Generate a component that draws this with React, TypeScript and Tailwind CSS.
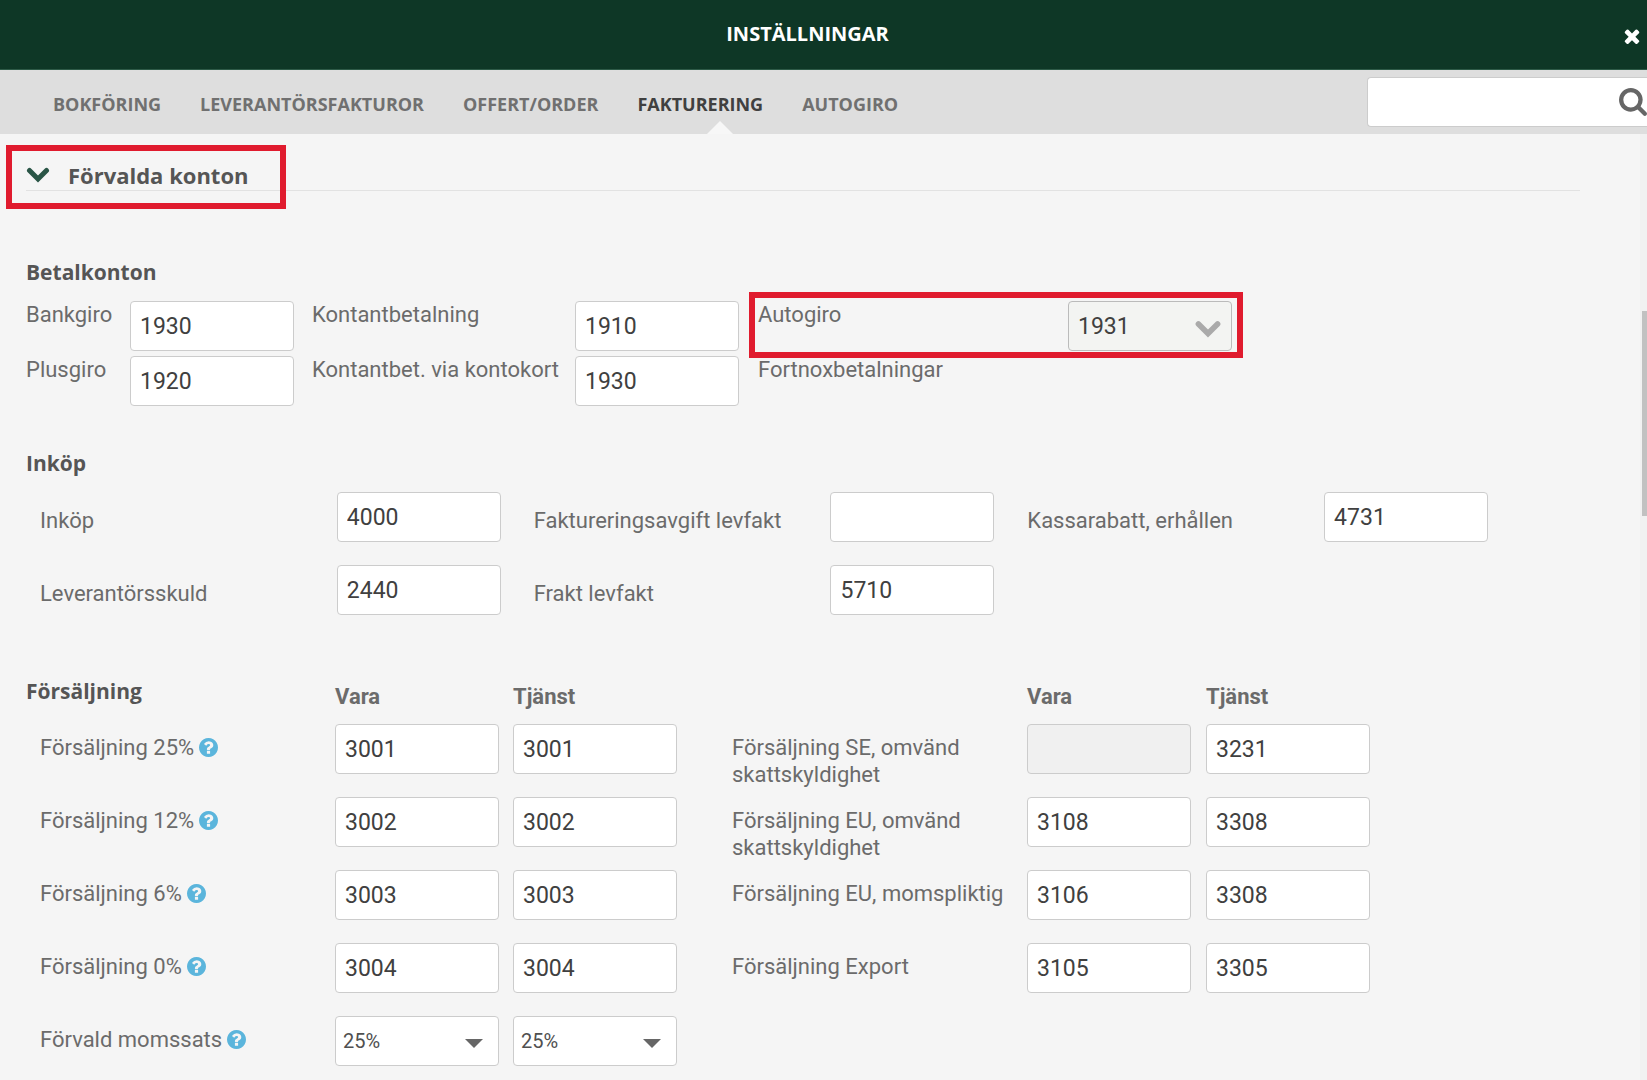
import { ReactNode } from "react";

const tabs = ["Bokföring", "Leverantörsfakturor", "Offert/Order", "Fakturering", "Autogiro"];

const purchaseFields = [
  { id: "inkop", label: "Inköp", value: "4000" },
  { id: "fakturaavgift", label: "Faktureringsavgift levfakt", value: "" },
  { id: "kassarabatt", label: "Kassarabatt, erhållen", value: "4731" },
  { id: "levskuld", label: "Leverantörsskuld", value: "2440" },
  { id: "frakt", label: "Frakt levfakt", value: "5710" },
];

const salesRows = [
  { id: "25", label: "Försäljning 25%", values: ["3001", "3001"], other: "Försäljning SE, omvänd skattskyldighet", otherValues: ["", "3231"] },
  { id: "12", label: "Försäljning 12%", values: ["3002", "3002"], other: "Försäljning EU, omvänd skattskyldighet", otherValues: ["3108", "3308"] },
  { id: "6", label: "Försäljning 6%", values: ["3003", "3003"], other: "Försäljning EU, momspliktig", otherValues: ["3106", "3308"] },
  { id: "0", label: "Försäljning 0%", values: ["3004", "3004"], other: "Försäljning Export", otherValues: ["3105", "3305"] },
];

const CloseIcon = () => (
  <svg viewBox="0 0 1792 1792" className="w-[22px] h-[22px]" fill="currentColor">
    <path d="M1490 1322q0 40-28 68l-136 136q-28 28-68 28t-68-28l-294-294-294 294q-28 28-68 28t-68-28l-136-136q-28-28-28-68t28-68l294-294-294-294q-28-28-28-68t28-68l136-136q28-28 68-28t68 28l294 294 294-294q28-28 68-28t68 28l136 136q28 28 28 68t-28 68l-294 294 294 294q28 28 28 68z" />
  </svg>
)

const SearchIcon = () => (
  <svg viewBox="64 128 1664 1664" className="w-7 h-7" fill="currentColor">
    <path d="M1216 832q0-185-131.5-316.5t-316.5-131.5-316.5 131.5-131.5 316.5 131.5 316.5 316.5 131.5 316.5-131.5 131.5-316.5zm512 832q0 52-38 90t-90 38q-54 0-90-38l-343-342q-179 124-399 124-143 0-273.5-55.5t-225-150-150-225-55.5-273.5 55.5-273.5 150-225 225-150 273.5-55.5 273.5 55.5 225 150 150 225 55.5 273.5q0 220-124 399l343 343q37 37 37 90z" />
  </svg>
)

const HelpIcon = () => (
  <svg viewBox="128 128 1536 1536" className="w-[19px] h-[19px]" fill="currentColor">
    <path d="M1024 1376v-192q0-14-9-23t-23-9h-192q-14 0-23 9t-9 23v192q0 14 9 23t23 9h192q14 0 23-9t9-23zm256-672q0-88-55.5-163t-138.5-116-170-41q-243 0-371 213-15 24 8 42l132 100q7 6 19 6 16 0 25-12 53-68 86-92 34-24 86-24 48 0 85.5 26t37.5 59q0 38-20 61t-68 45q-63 28-115.5 86.5t-52.5 125.5v36q0 14 9 23t23 9h192q14 0 23-9t9-23q0-19 21.5-49.5t54.5-49.5q32-18 49-28.5t46-35 44.5-48 28-60.5 12.5-81zm384 192q0 209-103 385.5t-279.5 279.5-385.5 103-385.5-103-279.5-279.5-103-385.5 103-385.5 279.5-279.5 385.5-103 385.5 103 279.5 279.5 103 385.5z" />
  </svg>
)

const Chevron = ({ className }: { className: string }) => (
  <svg viewBox="0 0 24 16" className={className} fill="none" stroke="currentColor" strokeWidth="5" strokeLinecap="round">
    <path d="M3.5 3.5 12 12l8.5-8.5" />
  </svg>
)

const Heading = ({ children }: { children: ReactNode }) => (
  <h3 className="font-['Open_Sans',sans-serif] font-bold text-[21px] leading-7 text-[#555]">{children}</h3>
)

const AccountInput = ({ id, value, label, disabled }: { id: string; value: string; label?: string; disabled?: boolean }) => (
  <input
    id={id}
    aria-label={label}
    defaultValue={value}
    disabled={disabled}
    className="w-[164px] h-[50px] rounded border border-[#ccc] bg-white px-[9px] text-[23px] text-[#404040] disabled:bg-[#f0f0f0]"
  />
)

const HelpLabel = ({ id, children }: { id: string; children: string }) => (
  <div className="flex items-start pl-3.5 pt-2.5">
    <label htmlFor={id}>{children}</label>
    <button type="button" aria-label="Hjälp" className="ml-[5px] mt-1 text-[#5bb5dc]"><HelpIcon /></button>
  </div>
)

const VatSelect = ({ id, label }: { id: string; label?: string }) => (
  <div className="relative w-[164px]">
    <select id={id} aria-label={label} className="w-full h-[50px] appearance-none rounded border border-[#ccc] bg-white px-[7px] text-xl text-[#505050]">
      <option>25%</option>
    </select>
    <svg viewBox="0 0 18 9" className="absolute right-4 top-[23px] w-[18px] h-[9px] pointer-events-none" fill="#666">
      <path d="M0 0h18L9 9z" />
    </svg>
  </div>
)

const App = () => (
  <div className="min-h-screen flex flex-col bg-[#f5f5f5] text-[22px] leading-[27px] text-[#6b6b6b] font-[Roboto,sans-serif]">
    <header className="relative h-[70px] pb-0.5 flex items-center justify-center bg-[#0e3726] border-b border-[#2d5a47]">
      <h1 className="font-['Open_Sans',sans-serif] font-bold text-xl text-white pr-8">INSTÄLLNINGAR</h1>
      <button aria-label="Stäng" className="absolute right-1 top-[25px] text-white"><CloseIcon /></button>
    </header>

    <nav className="h-16 flex items-center justify-between bg-[#dedede]">
      <ul className="h-full flex items-center gap-[39px] pl-[53px] font-['Open_Sans',sans-serif] font-bold text-lg text-[#707070]">
        {tabs.map((tab) => (
          <li key={tab} className="relative h-full flex items-center pt-1">
            <a href="#" className={tab === "Fakturering" ? "uppercase text-[#404040]" : "uppercase"}>{tab}</a>
            {tab === "Fakturering" && (
              <svg viewBox="0 0 26 13" className="absolute bottom-0 right-[30px] w-[26px] h-[13px]" fill="#f7f7f7">
                <path d="M0 13 13 0l13 13z" />
              </svg>
            )}
          </li>
        ))}
      </ul>
      <div className="w-[280px] h-[50px] flex items-center rounded-l border border-r-0 border-[#ccc] bg-white text-[#666]">
        <input aria-label="Sök" className="min-w-0 flex-1 h-full px-2 outline-none" />
        <button aria-label="Sök"><SearchIcon /></button>
      </div>
    </nav>

    <div className="flex-1 flex">
      <main className="flex-1 pl-[26px] pr-[60px]">
        <div className="h-[57px] flex items-end pb-px border-b border-[#e2e2e2]">
          <button className="relative flex items-center gap-[18px]">
            <Chevron className="w-6 h-4 text-[#2a5546]" />
            <h2 className="font-['Open_Sans',sans-serif] font-bold text-[22px] leading-7 text-[#555]">Förvalda konton</h2>
            <span className="absolute -left-5 -right-[38px] -top-4 h-16 border-6 border-[#e01b2e]" />
          </button>
        </div>

        <form className="pr-[59px]">
          <section className="pt-[67px]">
            <Heading>Betalkonton</Heading>
            <div className="mt-[15px] grid grid-cols-[104fr_182fr_263fr_183fr_310fr_453fr] gap-y-[5px]">
              <label htmlFor="bankgiro">Bankgiro</label>
              <AccountInput id="bankgiro" value="1930" />
              <label htmlFor="kontant">Kontantbetalning</label>
              <AccountInput id="kontant" value="1910" />
              <div className="relative col-span-2 grid grid-cols-[310fr_453fr]">
                <label htmlFor="autogiro">Autogiro</label>
                <div className="relative w-[164px]">
                  <select id="autogiro" className="w-full h-[50px] appearance-none rounded border border-[#bbb] bg-[#f3f4f2] px-[9px] text-[23px] text-[#404040]">
                    <option>1931</option>
                  </select>
                  <Chevron className="absolute right-2.5 top-[19px] w-[28px] h-[18px] text-[#aaa] pointer-events-none" />
                  <span className="absolute -left-[319px] -right-[11px] -top-[9px] h-[66px] border-6 border-[#e01b2e] pointer-events-none" />
                </div>
              </div>
              <label htmlFor="plusgiro">Plusgiro</label>
              <AccountInput id="plusgiro" value="1920" />
              <label htmlFor="kontokort">Kontantbet. via kontokort</label>
              <AccountInput id="kontokort" value="1930" />
              <span>Fortnoxbetalningar</span>
            </div>
          </section>

          <section className="pt-[43px]">
            <Heading>Inköp</Heading>
            <div className="mt-[15px] pl-3.5 grid grid-cols-3 gap-y-[23px]">
              {purchaseFields.map((field) => (
                <div key={field.id} className="grid grid-cols-[297fr_197fr]">
                  <label htmlFor={field.id} className="pt-[15px]">{field.label}</label>
                  <AccountInput id={field.id} value={field.value} />
                </div>
              ))}
            </div>
          </section>

          <section className="pt-[62px]">
            <div className="grid grid-cols-[309fr_178fr_219fr_295fr_179fr_315fr] h-[47px] items-start font-bold">
              <Heading>Försäljning</Heading>
              <span className="pt-1.5">Vara</span>
              <span className="pt-1.5">Tjänst</span>
              <span className="col-start-5 pt-1.5">Vara</span>
              <span className="pt-1.5">Tjänst</span>
            </div>
            <div className="grid grid-cols-[309fr_178fr_219fr_295fr_179fr_315fr] auto-rows-[50px] gap-y-[23px]">
              {salesRows.map((row) => (
                <div key={row.id} className="contents">
                  <HelpLabel id={"vara" + row.id}>{row.label}</HelpLabel>
                  <AccountInput id={"vara" + row.id} value={row.values[0]} />
                  <AccountInput id={"tjanst" + row.id} label={row.label + " tjänst"} value={row.values[1]} />
                  <label htmlFor={"tjanst-b" + row.id} className="pt-2.5 pr-5">{row.other}</label>
                  <AccountInput id={"vara-b" + row.id} label={row.other + " vara"} value={row.otherValues[0]} disabled={!row.otherValues[0]} />
                  <AccountInput id={"tjanst-b" + row.id} value={row.otherValues[1]} />
                </div>
              ))}
              <HelpLabel id="moms-vara">Förvald momssats</HelpLabel>
              <VatSelect id="moms-vara" />
              <VatSelect id="moms-tjanst" label="Förvald momssats tjänst" />
            </div>
          </section>
        </form>
      </main>
      <div className="w-[7px] pl-0.5 pt-[177px] bg-[#f1f1f1]">
        <div className="h-[205px] bg-[#c1c1c1]" />
      </div>
    </div>
  </div>
)

export default App;
